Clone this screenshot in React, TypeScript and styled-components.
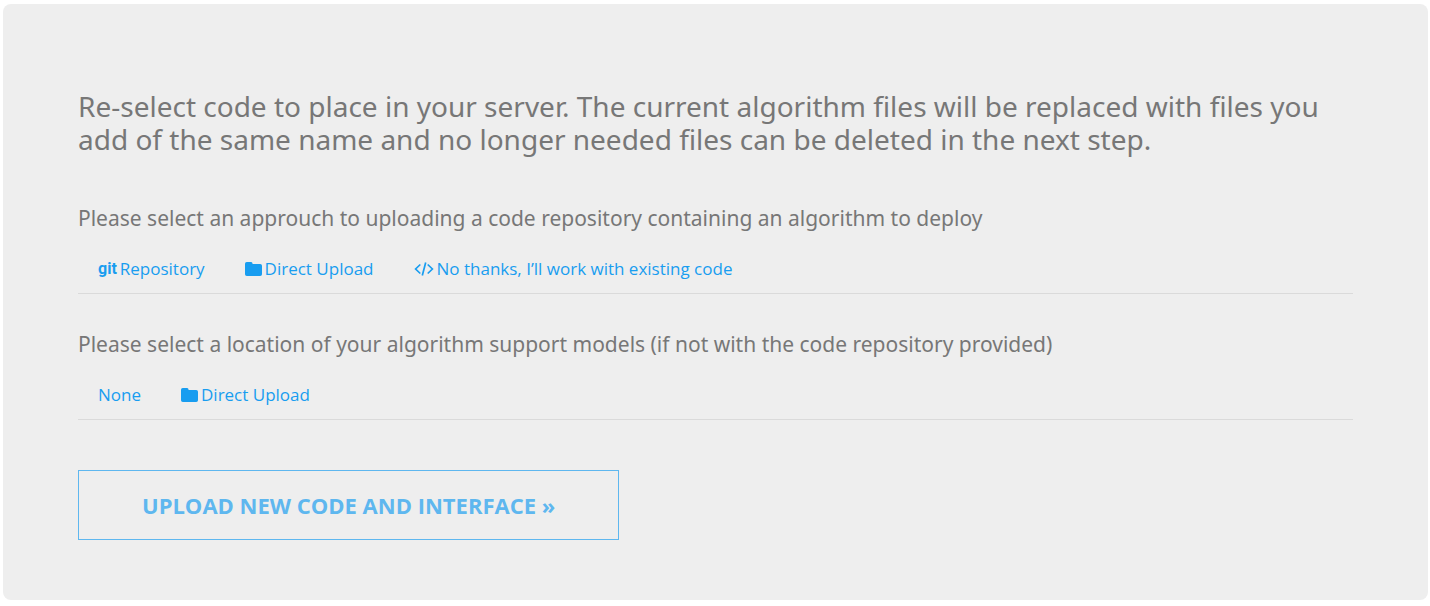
import React from "react";
import styled, { createGlobalStyle } from "styled-components";

const GlobalStyle = createGlobalStyle`
  *, *::before, *::after { box-sizing: border-box; }
  body {
    margin: 0;
    padding: 4px 2px 6px 3px;
    background: #fff;
    color: #777;
    font-family: "Noto Sans", "Open Sans", sans-serif;
  }
`;

const Panel = styled.main`
  padding: 86px 75px 60px;
  border-radius: 8px;
  background: #eee;
`;

const Lead = styled.h1`
  margin: 0;
  font-size: 28px;
  font-weight: 400;
  line-height: 33px;
`;

const Section = styled.section<{ $gap: number }>`
  margin-top: ${(p) => p.$gap}px;
`;

const Prompt = styled.h2`
  margin: 0;
  font-size: 21px;
  font-weight: 400;
  line-height: 26px;
`;

const TabList = styled.nav`
  display: flex;
  margin-top: 12px;
  border-bottom: 1px solid #dadada;
`;

const Tab = styled.a`
  display: flex;
  align-items: center;
  gap: 3px;
  padding: 14px 20px 12px;
  font-family: "Open Sans", "Noto Sans", sans-serif;
  font-size: 17px;
  line-height: 24px;
  color: #189df0;
  text-decoration: none;
  white-space: nowrap;

  svg { flex: none; }
`;

const GitMark = styled.b`
  font-family: Roboto, sans-serif;
  font-size: 16px;
  line-height: 24px;
`;

const UploadButton = styled.button`
  display: block;
  height: 70px;
  margin-top: 50px;
  padding: 0 63px;
  border: 1px solid #5eb7ef;
  background: transparent;
  color: #5eb7ef;
  font-family: "Open Sans", "Noto Sans", sans-serif;
  font-size: 22px;
  font-weight: 700;
  line-height: 30px;
  white-space: nowrap;
  cursor: pointer;
`;

const FolderIcon = () => (
  <svg width="17" height="14" viewBox="0 0 17 14" fill="currentColor" aria-hidden="true">
    <path d="M0 1.7Q0 0 1.7 0H5.8Q7.3 0 7.5 1.3V2H15.2Q17 2 17 3.8V12.2Q17 14 15.2 14H1.8Q0 14 0 12.2Z" />
  </svg>
);

const CodeIcon = () => (
  <svg
    width="20"
    height="14"
    viewBox="0 0 20 14"
    fill="none"
    stroke="currentColor"
    strokeWidth="1.7"
    aria-hidden="true"
  >
    <path d="M6.3 2.5 1.6 7l4.7 4.5M13.7 2.5 18.4 7l-4.7 4.5M11.7.5 8.3 13.5" />
  </svg>
);

export default function App() {
  return (
    <>
      <GlobalStyle />
      <Panel>
        <Lead>
          Re-select code to place in your server. The current algorithm files will be replaced with
          files you add of the same name and no longer needed files can be deleted in the next step.
        </Lead>
        <Section $gap={49}>
          <Prompt>
            Please select an approuch to uploading a code repository containing an algorithm to
            deploy
          </Prompt>
          <TabList>
            <Tab href="#repository">
              <GitMark>git</GitMark>
              Repository
            </Tab>
            <Tab href="#code-upload">
              <FolderIcon />
              Direct Upload
            </Tab>
            <Tab href="#existing">
              <CodeIcon />
              No thanks, I’ll work with existing code
            </Tab>
          </TabList>
        </Section>
        <Section $gap={37}>
          <Prompt>
            Please select a location of your algorithm support models (if not with the code
            repository provided)
          </Prompt>
          <TabList>
            <Tab href="#none">None</Tab>
            <Tab href="#model-upload">
              <FolderIcon />
              Direct Upload
            </Tab>
          </TabList>
        </Section>
        <UploadButton type="button">UPLOAD NEW CODE AND INTERFACE »</UploadButton>
      </Panel>
    </>
  );
}
